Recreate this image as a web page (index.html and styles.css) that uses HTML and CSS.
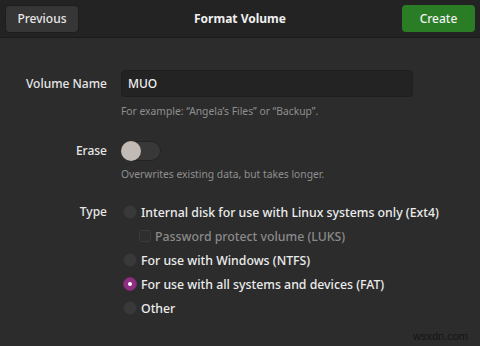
FILE: index.html
```html
<!DOCTYPE html>
<html lang="en">
<head>
    <meta charset="UTF-8">
    <title>Format Volume</title>
    <link rel="stylesheet" href="styles.css">
</head>
<body>
    <div class="dialog">
        <header class="titlebar">
            <button class="btn btn-prev">Previous</button>
            <h1 class="title">Format Volume</h1>
            <button class="btn btn-create">Create</button>
        </header>

        <div class="form">
            <div class="row">
                <label class="label" for="volName">Volume Name</label>
                <div class="field">
                    <input class="entry" id="volName" type="text" value="MUO">
                    <p class="hint">For example: “Angela’s Files” or “Backup”.</p>
                </div>
            </div>

            <div class="row row-erase">
                <span class="label">Erase</span>
                <div class="field">
                    <span class="switch"><span class="knob"></span></span>
                    <p class="hint">Overwrites existing data, but takes longer.</p>
                </div>
            </div>

            <div class="row row-type">
                <span class="label">Type</span>
                <div class="options">
                    <div class="option"><span class="radio"></span>Internal disk for use with Linux systems only (Ext4)</div>
                    <div class="option option-sub disabled"><span class="check"></span>Password protect volume (LUKS)</div>
                    <div class="option"><span class="radio"></span>For use with Windows (NTFS)</div>
                    <div class="option"><span class="radio checked"></span>For use with all systems and devices (FAT)</div>
                    <div class="option"><span class="radio"></span>Other</div>
                </div>
            </div>
        </div>

        <div class="watermark">wsxdn.com</div>
    </div>
</body>
</html>
```

FILE: styles.css
```css
* {
    margin: 0;
    padding: 0;
    box-sizing: border-box;
}

body {
    font-family: 'Noto Sans', sans-serif;
    background: #2c2c2c;
    width: 480px;
    height: 346px;
    overflow: hidden;
    color: #eeeeec;
}

.dialog {
    width: 480px;
    height: 346px;
    position: relative;
    background: #2c2c2c;
}

/* Header bar */
.titlebar {
    height: 38px;
    background: #232323;
    border-bottom: 1px solid #1b1b1b;
    display: flex;
    align-items: center;
    justify-content: space-between;
    padding: 0 5px 0 6px;
}

.title {
    font-size: 12px;
    font-weight: 700;
    color: #f0f0f0;
}

.btn {
    font-family: inherit;
    font-size: 12px;
    font-weight: 500;
    border: none;
    border-radius: 4px;
    height: 26px;
    color: #e8e8e8;
}

.btn-prev {
    width: 72px;
    background: #363636;
    box-shadow: 0 0 0 1px #1e1e1e;
}

.btn-create {
    width: 73px;
    height: 27px;
    background: #2a7d25;
    color: #f2f2f2;
}

/* Form */
.form {
    padding-top: 32px;
}

.row {
    display: flex;
    gap: 14px;
}

.label {
    width: 107px;
    text-align: right;
    font-size: 12px;
    font-weight: 500;
    color: #e6e6e6;
    line-height: 27px;
}

.field {
    display: flex;
    flex-direction: column;
}

.entry {
    width: 292px;
    height: 27px;
    background: #232323;
    border: 1px solid #1f1f1f;
    border-radius: 4px;
    color: #f0f0f0;
    font-family: inherit;
    font-size: 12px;
    font-weight: 500;
    padding: 0 6px;
    outline: none;
}

.hint {
    font-size: 10.3px;
    color: #8f8f8f;
    margin-top: 7px;
}

.row-erase {
    margin-top: 23px;
}

.row-erase .label {
    line-height: 20px;
}

.switch {
    width: 40px;
    height: 20px;
    border-radius: 10px;
    background: #383838;
    border: 1px solid #232323;
    display: flex;
    align-items: center;
}

.knob {
    width: 20px;
    height: 20px;
    margin-left: -1px;
    border-radius: 50%;
    background: #c2bab4;
}

.row-erase .hint {
    margin-top: 6px;
}

.row-type {
    margin-top: 19px;
}

.row-type .label {
    line-height: 24px;
}

.options {
    display: flex;
    flex-direction: column;
    margin-left: 2px;
}

.option {
    display: flex;
    align-items: center;
    gap: 4px;
    height: 24px;
    font-size: 12.3px;
    font-weight: 500;
    color: #ececec;
}

.option-sub {
    padding-left: 16px;
}

.disabled {
    color: #8a8a8a;
}

.radio {
    width: 14px;
    height: 14px;
    border-radius: 50%;
    background: #393939;
    border: 1px solid #313131;
    display: flex;
    align-items: center;
    justify-content: center;
}

.radio.checked {
    background: #8e2f82;
    border-color: #7a2670;
}

.radio.checked::after {
    content: "";
    width: 4px;
    height: 4px;
    border-radius: 50%;
    background: #fff;
}

.check {
    width: 12px;
    height: 12px;
    border-radius: 2px;
    border: 1px solid #3a3a3a;
    background: #2e2e2e;
}

.watermark {
    position: absolute;
    right: 12px;
    bottom: 4px;
    font-family: 'Liberation Sans', sans-serif;
    font-size: 11px;
    color: #151515;
}
```
